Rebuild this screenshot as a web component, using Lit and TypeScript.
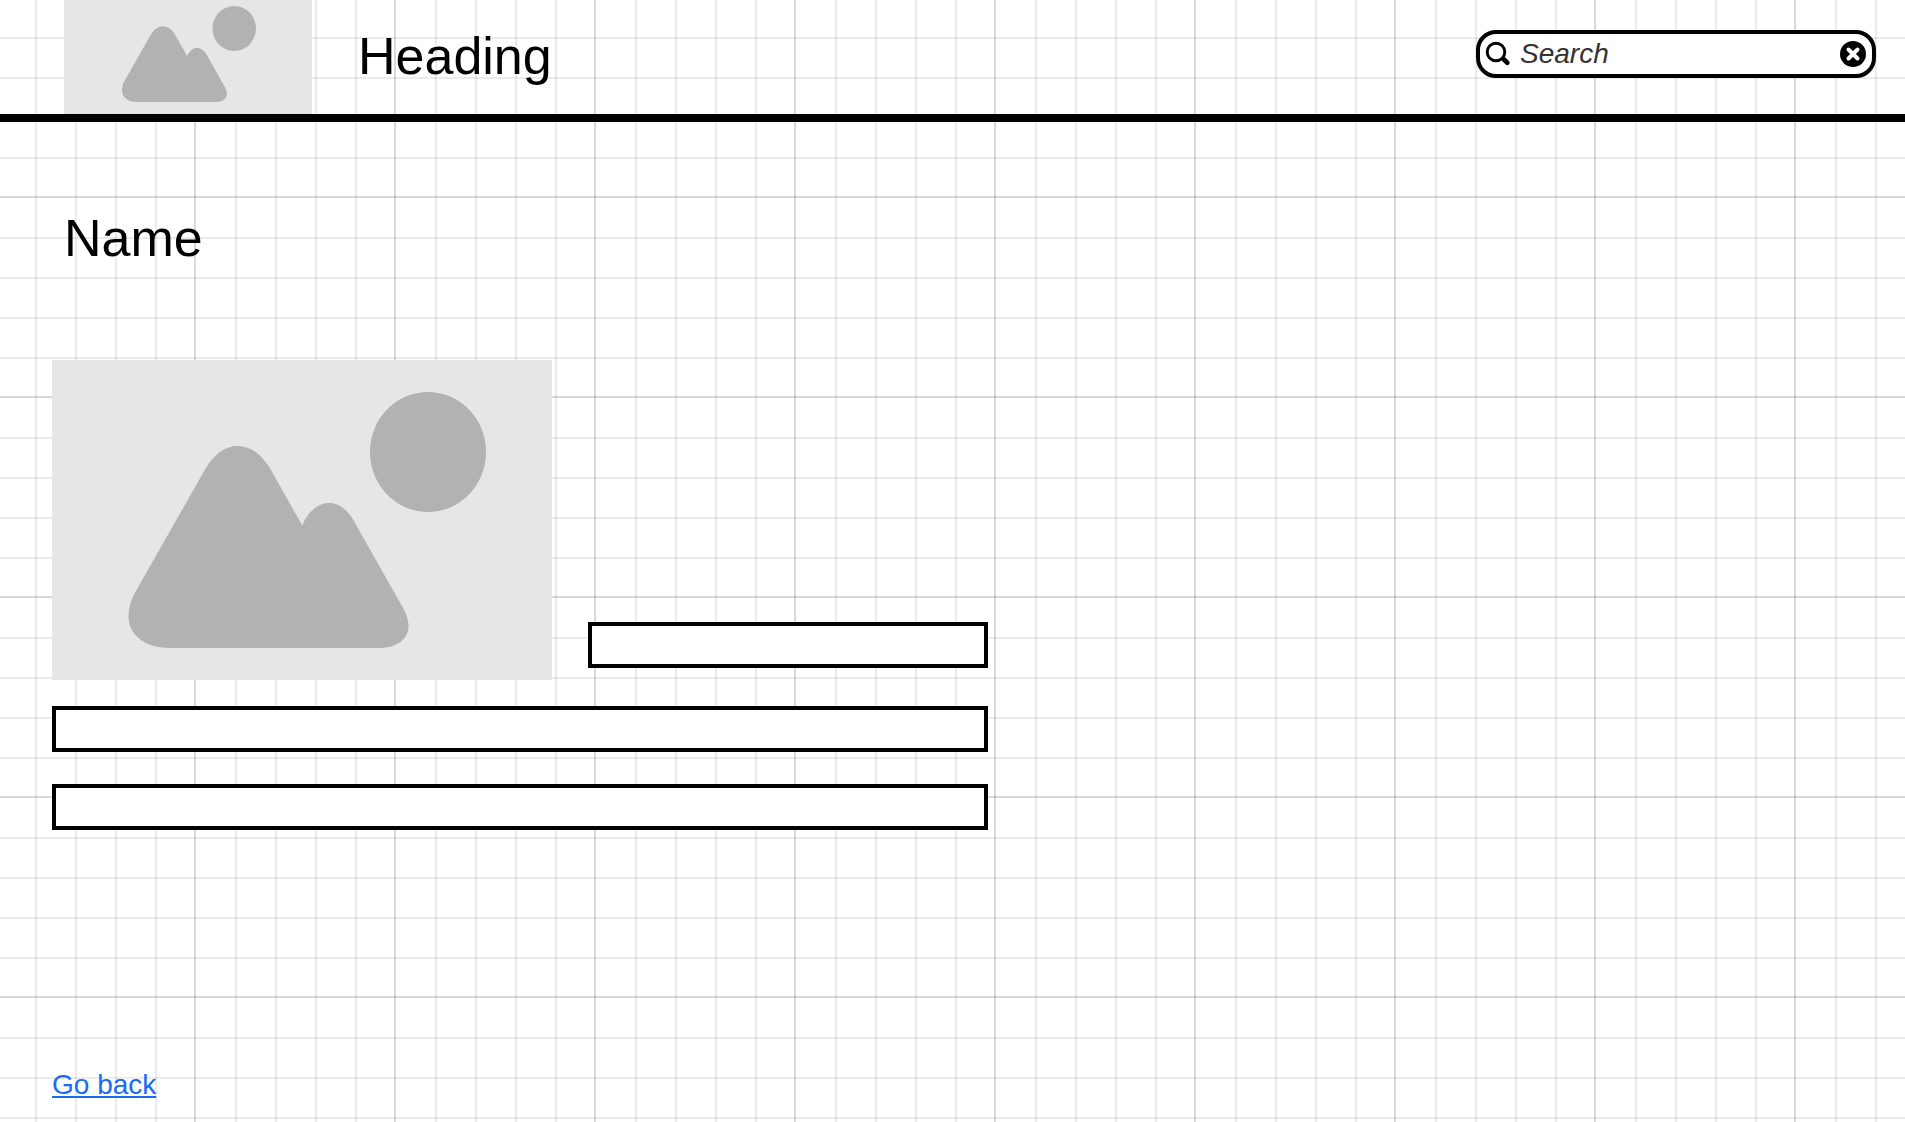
import { LitElement, html, css } from "lit";
import { customElement, property, query } from "lit/decorators.js";

/** Grey landscape placeholder that keeps its proportions in any frame. */
@customElement("picture-placeholder")
class PicturePlaceholder extends LitElement {
  @property() label = "";

  static styles = css`
    :host {
      display: block;
      box-sizing: border-box;
      background: #e6e6e6;
    }
    .art {
      display: block;
      width: 100%;
      height: 100%;
      fill: #b2b2b2;
    }
  `;

  render() {
    return html`
      <svg class="art" viewBox="0 0 500 320" role="img" aria-label=${this.label}>
        <ellipse cx="376" cy="92" rx="58" ry="60"></ellipse>
        <path
          d="M153.7 108.3 C162.5 94 173 86 185.7 86 C198 86 209 94 217.3 107 L250.3 165.5
             C255 153 265.5 143 277 143 C286.5 143 295 149.5 301 159.5 L350.5 247
             C354.5 254 356.5 260 356.5 266 C356.5 279 345 288 327 288 L118.5 288
             C93 288 76.5 275 76.5 256.5 C76.5 248 78.5 241 82.5 233.5 Z"
        ></path>
      </svg>
    `;
  }
}

/** Rounded search box with a clear button. */
@customElement("search-box")
class SearchBox extends LitElement {
  @query(".input") input!: HTMLInputElement;

  static styles = css`
    :host {
      display: block;
    }
    .box {
      display: flex;
      align-items: center;
      gap: 10px;
      box-sizing: border-box;
      height: 48px;
      padding: 0 6px;
      border: 4px solid #000;
      border-radius: 20px;
      background: #fff;
    }
    .glass,
    .cross {
      display: block;
      flex: none;
      overflow: visible;
    }
    .input {
      flex: 1;
      min-width: 0;
      padding: 0;
      border: 0;
      outline: 0;
      background: transparent;
      color: #333;
      font: italic 28px/32px "Liberation Sans", Arial, sans-serif;
    }
    .input::placeholder {
      color: #333;
      opacity: 1;
    }
    .clear {
      flex: none;
      padding: 0;
      border: 0;
      background: none;
      cursor: pointer;
    }
  `;

  private clear() {
    this.input.value = "";
    this.input.focus();
  }

  render() {
    return html`
      <div class="box" role="search">
        <svg class="glass" width="24" height="24" viewBox="0 0 24 24" fill="none" stroke="#000" aria-hidden="true">
          <circle cx="10" cy="10" r="8.8" stroke-width="2.9"></circle>
          <path d="M16 16 L18 18" stroke-width="3.4"></path>
          <path d="M18 17.6 L21.3 20.7" stroke-width="4.8" stroke-linecap="round"></path>
        </svg>
        <input class="input" type="text" placeholder="Search" aria-label="Search" />
        <button class="clear" type="button" aria-label="Clear search" @click=${this.clear}>
          <svg class="cross" width="26" height="26" viewBox="0 0 26 26" aria-hidden="true">
            <circle cx="13" cy="13" r="13"></circle>
            <path d="M8.5 8.5 L17.5 17.5 M17.5 8.5 L8.5 17.5" stroke="#fff" stroke-width="4" stroke-linecap="round"></path>
          </svg>
        </button>
      </div>
    `;
  }
}

@customElement("app-root")
class AppRoot extends LitElement {
  static styles = css`
    :host {
      display: block;
      --minor: rgba(0, 0, 0, 0.08);
      --major: rgba(0, 0, 0, 0.15);
      font-family: "Liberation Sans", Arial, sans-serif;
      color: #000;
    }
    .page {
      display: flex;
      flex-direction: column;
      box-sizing: border-box;
      min-height: 100vh;
      background-color: #fff;
      background-size: 200px 200px;
      background-image: linear-gradient(
          to right,
          transparent 35px,
          var(--minor) 35px 37px,
          transparent 37px 75px,
          var(--minor) 75px 77px,
          transparent 77px 115px,
          var(--minor) 115px 117px,
          transparent 117px 155px,
          var(--minor) 155px 157px,
          transparent 157px 194px,
          var(--major) 194px 196px,
          transparent 196px
        ),
        linear-gradient(
          to bottom,
          transparent 37px,
          var(--minor) 37px 39px,
          transparent 39px 77px,
          var(--minor) 77px 79px,
          transparent 79px 117px,
          var(--minor) 117px 119px,
          transparent 119px 157px,
          var(--minor) 157px 159px,
          transparent 159px 196px,
          var(--major) 196px 198px,
          transparent 198px
        );
    }
    .header {
      display: flex;
      align-items: center;
      height: 114px;
      padding: 0 29px 0 64px;
      border-bottom: 8px solid #000;
      overflow: hidden;
    }
    .logo {
      align-self: flex-end;
      flex: none;
      width: 248px;
      height: 120px;
      padding-right: 2px;
    }
    .title {
      margin: 0;
      font-size: 52px;
      line-height: 60px;
      font-weight: 400;
    }
    .header .title {
      margin: 0 0 2px 46px;
    }
    .search {
      width: 400px;
      margin: 0 0 6px auto;
    }
    .main {
      flex: 1;
      padding: 86px 52px 0;
    }
    .main .title {
      padding-left: 12px;
    }
    .form {
      display: flex;
      flex-direction: column;
      gap: 32px;
      max-width: 936px;
      margin-top: 92px;
    }
    .row {
      display: flex;
      align-items: flex-end;
      gap: 36px;
      margin-bottom: -6px;
    }
    .photo {
      flex: none;
      width: 500px;
      height: 320px;
    }
    .beside {
      flex: 1;
      min-width: 0;
      padding-bottom: 12px;
    }
    .field {
      display: block;
      box-sizing: border-box;
      width: 100%;
      height: 46px;
      padding: 0 8px;
      border: 4px solid #000;
      border-radius: 0;
      background: #fff;
      font: 28px/32px "Liberation Sans", Arial, sans-serif;
    }
    .footer {
      display: flex;
      padding: 0 52px 21px;
    }
    .back {
      color: #1a6af5;
      font-size: 28px;
      line-height: 32px;
      text-decoration: underline;
      text-decoration-thickness: 2px;
      text-underline-offset: 2px;
      text-decoration-skip-ink: none;
    }
  `;

  render() {
    return html`
      <div class="page">
        <header class="header">
          <picture-placeholder class="logo" label="Logo"></picture-placeholder>
          <h1 class="title">Heading</h1>
          <search-box class="search"></search-box>
        </header>
        <main class="main">
          <h2 class="title">Name</h2>
          <form class="form">
            <div class="row">
              <picture-placeholder class="photo" label="Photo"></picture-placeholder>
              <div class="beside">
                <input class="field" type="text" aria-label="Caption" />
              </div>
            </div>
            <input class="field" type="text" aria-label="First line" />
            <input class="field" type="text" aria-label="Second line" />
          </form>
        </main>
        <footer class="footer">
          <a class="back" href="#">Go back</a>
        </footer>
      </div>
    `;
  }
}
